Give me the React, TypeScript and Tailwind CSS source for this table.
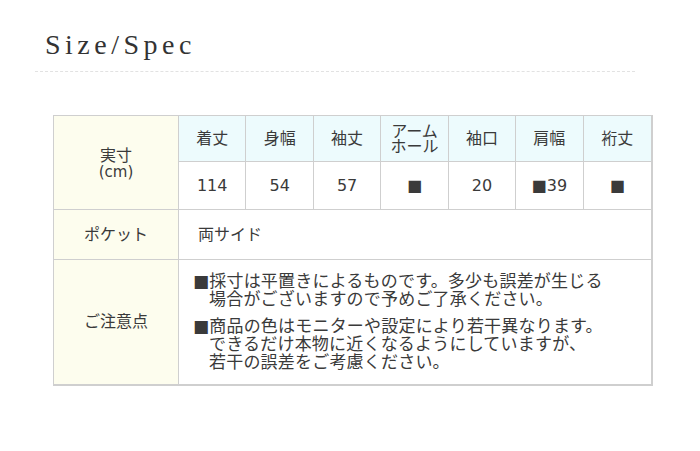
const HEADERS: { label: string; value: string }[] = [
  { label: '着丈', value: '114' },
  { label: '身幅', value: '54' },
  { label: '袖丈', value: '57' },
  { label: 'アーム\nホール', value: '■' },
  { label: '袖口', value: '20' },
  { label: '肩幅', value: '■39' },
  { label: '裄丈', value: '■' },
];

const NOTES: string[][] = [
  ['■採寸は平置きによるものです。多少も誤差が生じる', '場合がございますので予めご了承ください。'],
  ['■商品の色はモニターや設定により若干異なります。', 'できるだけ本物に近くなるようにしていますが、', '若干の誤差をご考慮ください。'],
];

const FONT = "font-['DejaVu_Sans','Noto_Sans_CJK_JP',sans-serif]";

export default function App() {
  return (
    <div className={`h-[451px] w-[700px] bg-white text-[#3a3a3a] ${FONT}`}>
      <div className="pt-[29px] pl-[45px]">
        <h1 className="font-['Liberation_Serif',serif] text-[28px] leading-[32px] tracking-[4.5px] text-[#333]">
          Size/Spec
        </h1>
      </div>
      <div className="ml-[35px] mt-[10px] w-[600px] border-b border-dashed border-[#e2e2e2]" />

      <div className="ml-[53px] mt-[43px] w-[600px] border-t border-l border-r-2 border-b-2 border-[#cfcfcf]">
        <div className="grid grid-cols-[125px_repeat(7,1fr)] grid-rows-[46px_48px_50px_124px]">
          <div className="row-span-2 flex flex-col items-center justify-center border-r border-b border-[#cfcfcf] bg-[#fdfdee] pt-[3px] text-[16px] leading-[17px]">
            <span>実寸</span>
            <span className="text-[15px]">(cm)</span>
          </div>
          {HEADERS.map((h, i) => (
            <div
              key={h.label}
              className={`flex items-center justify-center whitespace-pre-line border-b border-[#cfcfcf] bg-[#edfbfd] text-center text-[16px] leading-[15px] ${i < 6 ? 'border-r' : ''}`}
            >
              {h.label}
            </div>
          ))}
          {HEADERS.map((h, i) => (
            <div
              key={h.label + '-v'}
              className={`flex items-center justify-center border-b border-[#cfcfcf] text-[16px] ${i < 6 ? 'border-r' : ''}`}
            >
              {h.value}
            </div>
          ))}

          <div className="flex items-center justify-center border-r border-b border-[#cfcfcf] bg-[#fdfdee] text-[16px]">
            ポケット
          </div>
          <div className="col-span-7 flex items-center border-b border-[#cfcfcf] pl-[19px] text-[16px]">
            両サイド
          </div>

          <div className="flex items-center justify-center border-r border-[#cfcfcf] bg-[#fdfdee] text-[16px]">
            ご注意点
          </div>
          <div className="col-span-7 flex flex-col gap-[9px] pt-[12px] pl-[14px] text-[17px] leading-[18px] tracking-[0.2px]">
            {NOTES.map((lines, i) => (
              <p key={i}>
                {lines.map((line, j) => (
                  <span key={j} className={`block ${j > 0 ? 'pl-[16px]' : ''}`}>
                    {line}
                  </span>
                ))}
              </p>
            ))}
          </div>
        </div>
      </div>
    </div>
  );
}
